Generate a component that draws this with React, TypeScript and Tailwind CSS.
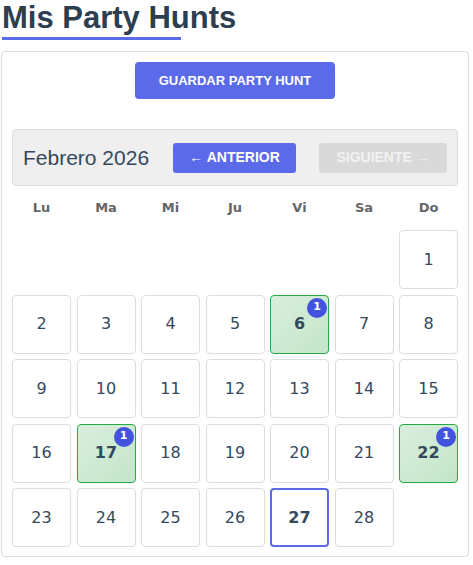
import React from "react";

const WEEKDAYS = ["Lu", "Ma", "Mi", "Ju", "Vi", "Sa", "Do"];
const HUNTS: Record<number, number> = { 6: 1, 17: 1, 22: 1 };
const TODAY = 27;

function DayCell({ day }: { day: number }) {
  const count = HUNTS[day];
  const isToday = day === TODAY;
  let cls = "border border-[#dddddd] bg-white font-normal";
  if (count) cls = "border border-[#28a745] bg-gradient-to-br from-[#d9efdc] to-[#c4e4ca] font-bold";
  if (isToday) cls = "border-2 border-[#5b6ae6] bg-white font-bold";
  return (
    <div className={`relative flex aspect-square items-center justify-center rounded-[4px] text-[16px] text-[#34495e] ${cls}`}>
      {day}
      {count ? (
        <span className="absolute right-[1px] top-[2px] flex h-[20px] w-[20px] items-center justify-center rounded-full bg-[#4353e0] text-[11px] font-bold text-white">
          {count}
        </span>
      ) : null}
    </div>
  );
}

export default function App() {
  // febrero 2026 empieza en domingo
  const blanks = 6;
  const days = Array.from({ length: 28 }, (_, i) => i + 1);

  return (
    <div className="h-[565px] w-[473px] bg-white font-['DejaVu_Sans',sans-serif]">
      <div className="pl-[2px] pt-[1px]">
        <h1 className="font-['Liberation_Sans',Arial,sans-serif] text-[31px] font-bold leading-[34px] text-[#2c3e50]">
          Mis Party Hunts
        </h1>
        <div className="mt-[2px] h-[3px] w-[179px] bg-[#5b6ae6]" />
      </div>

      <div className="ml-[1px] mt-[11px] w-[468px] rounded-[4px] border border-[#dddddd] px-[10px] pb-[9px] pt-[10px]">
        <div className="flex justify-center">
          <button className="h-[37px] w-[200px] rounded-[4px] bg-[#5b6ae8] font-['Liberation_Sans',Arial,sans-serif] text-[13px] font-bold text-white">
            GUARDAR PARTY HUNT
          </button>
        </div>

        <div className="mt-[30px] flex h-[57px] items-center whitespace-nowrap rounded-[4px] border border-[#dddddd] bg-[#efefef] pl-[10px] pr-[10px] font-['Liberation_Sans',Arial,sans-serif]">
          <span className="shrink-0 text-[21px] text-[#34495e]">Febrero 2026</span>
          <button className="ml-[24px] h-[30px] w-[123px] shrink-0 rounded-[3px] bg-[#5b6ae8] text-[14px] font-bold text-white">
            ← ANTERIOR
          </button>
          <button className="ml-[23px] h-[30px] w-[128px] shrink-0 rounded-[3px] bg-[#d9d9d9] text-[14px] font-bold text-[#f2f2f2]">
            SIGUIENTE →
          </button>
        </div>

        <div className="mt-[14px] grid grid-cols-7 gap-x-[5.5px]">
          {WEEKDAYS.map((w) => (
            <div key={w} className="text-center text-[13px] font-bold leading-[16px] text-[#666666]">
              {w}
            </div>
          ))}
        </div>

        <div className="mt-[14px] grid grid-cols-7 gap-[5.5px]">
          {Array.from({ length: blanks }, (_, i) => (
            <div key={`b${i}`} />
          ))}
          {days.map((d) => (
            <DayCell key={d} day={d} />
          ))}
        </div>
      </div>
    </div>
  );
}
